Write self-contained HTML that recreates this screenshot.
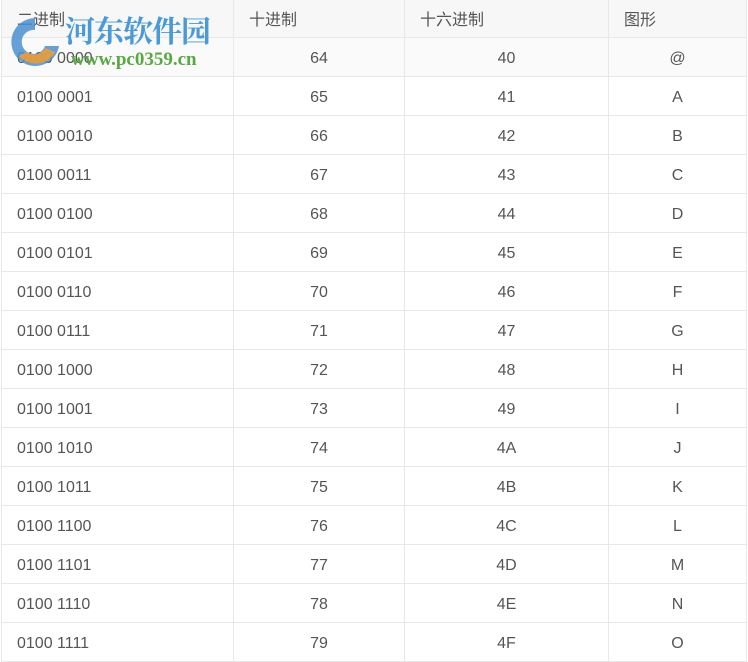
<html><head><style>
body{margin:0;background:#fff;font-family:"Liberation Sans","Noto Sans CJK SC",sans-serif;font-size:13px;color:#555;overflow:hidden}
table{border-collapse:collapse;position:absolute;left:1px;top:-1px;width:746px;table-layout:fixed}
td,th{border:1px solid #e8e8e8;padding:0;font-weight:normal}
td{padding-top:3px;height:39px;text-align:center}
th{background:#f7f7f7;text-align:left;padding-left:15px;padding-bottom:2px;height:38px}
td:first-child{text-align:left;padding-left:15px}
tr.g td{background:#fafafa}
.logo{position:absolute;left:5px;top:8px}
</style></head><body>
<table>
<colgroup><col style="width:232px"><col style="width:171px"><col style="width:204px"><col></colgroup>
<tr><th>二进制</th><th>十进制</th><th>十六进制</th><th>图形</th></tr>
<tr class="g"><td>0100 0000</td><td>64</td><td>40</td><td>@</td></tr>
<tr><td>0100 0001</td><td>65</td><td>41</td><td>A</td></tr>
<tr><td>0100 0010</td><td>66</td><td>42</td><td>B</td></tr>
<tr><td>0100 0011</td><td>67</td><td>43</td><td>C</td></tr>
<tr><td>0100 0100</td><td>68</td><td>44</td><td>D</td></tr>
<tr><td>0100 0101</td><td>69</td><td>45</td><td>E</td></tr>
<tr><td>0100 0110</td><td>70</td><td>46</td><td>F</td></tr>
<tr><td>0100 0111</td><td>71</td><td>47</td><td>G</td></tr>
<tr><td>0100 1000</td><td>72</td><td>48</td><td>H</td></tr>
<tr><td>0100 1001</td><td>73</td><td>49</td><td>I</td></tr>
<tr><td>0100 1010</td><td>74</td><td>4A</td><td>J</td></tr>
<tr><td>0100 1011</td><td>75</td><td>4B</td><td>K</td></tr>
<tr><td>0100 1100</td><td>76</td><td>4C</td><td>L</td></tr>
<tr><td>0100 1101</td><td>77</td><td>4D</td><td>M</td></tr>
<tr><td>0100 1110</td><td>78</td><td>4E</td><td>N</td></tr>
<tr><td>0100 1111</td><td>79</td><td>4F</td><td>O</td></tr>
</table>
<div class="logo">
<svg width="60" height="60" style="position:absolute;left:0;top:4px" viewBox="0 0 60 60">
<path d="M30 6 A24 24 0 1 0 54 34 L40 34 A12 12 0 1 1 30 18 Z" fill="#4a90d0" opacity="0.85"/>
<path d="M14 44 A22 22 0 0 0 50 40 L40 36 A12 12 0 0 1 22 40 Z" fill="#f39c32" opacity="0.85"/>
</svg>
<div style="position:absolute;left:60px;top:4px;font-family:'Noto Serif CJK SC',serif;font-weight:bold;font-size:30px;line-height:34px;color:#4a9ad8;white-space:nowrap;letter-spacing:-1px">河东软件园</div>
<div style="position:absolute;left:66px;top:41px;font-family:'Liberation Serif',serif;font-weight:bold;font-size:19px;color:#5aa843;white-space:nowrap">www.pc0359.cn</div>
</div>
</body></html>
